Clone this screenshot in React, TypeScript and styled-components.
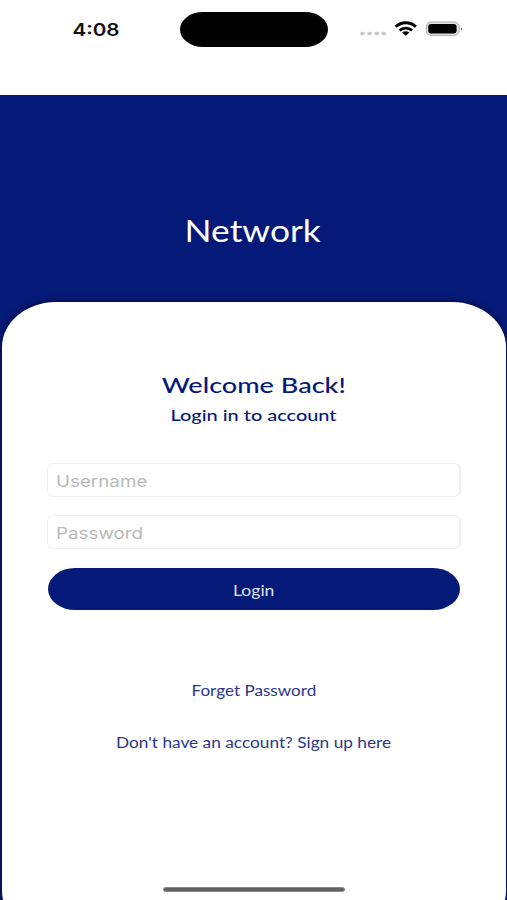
import React from "react";
import styled, { createGlobalStyle } from "styled-components";

const navy = "#051a78";

const GlobalStyle = createGlobalStyle`
  * { box-sizing: border-box; }
  body { margin: 0; background: #fff; }
`;

const Screen = styled.main`
  width: 507px;
  height: 900px;
  overflow: hidden;
  display: flex;
  flex-direction: column;
  position: relative;
  background: #fff;
  font-family: Lato, sans-serif;
`;

const StatusBar = styled.header`
  height: 95px;
  flex: none;
  display: grid;
  grid-template-columns: 180px 148px 1fr;
  align-items: start;
  padding-top: 12px;
`;

const Clock = styled.div`
  height: 35px;
  padding-left: 12px;
  display: flex;
  align-items: center;
  justify-content: center;
  font-family: Inter, sans-serif;
`;

const Island = styled.div`
  height: 35px;
  border-radius: 23px / 17.5px;
  background: #000;
`;

const StatusIcons = styled.div`
  height: 35px;
  padding-left: 31px;
  display: flex;
  align-items: center;
`;

const Text = styled.span<{ $size: number; $stretch: number; $weight?: number; $color?: string }>`
  display: inline-block;
  white-space: nowrap;
  font-size: ${(p) => p.$size}px;
  font-weight: ${(p) => p.$weight ?? 400};
  color: ${(p) => p.$color ?? navy};
  transform: scaleX(${(p) => p.$stretch});
`;

const Backdrop = styled.div`
  flex: 1;
  min-height: 0;
  display: flex;
  flex-direction: column;
  background: ${navy};
`;

const Brand = styled.div`
  height: 207px;
  flex: none;
  padding: 62px 1px 0 0;
  display: flex;
  align-items: center;
  justify-content: center;
`;

const Card = styled.section`
  height: 634px;
  flex: none;
  margin: 0 1.5px 0 2px;
  padding: 68px 45.5px 0 46px;
  display: flex;
  flex-direction: column;
  background: #fff;
  border-radius: 54px / 45px;
  box-shadow: 0 0 6px rgba(0, 0, 20, 0.75);
`;

const Line = styled.div<{ $height: number }>`
  height: ${(p) => p.$height}px;
  line-height: ${(p) => p.$height}px;
  text-align: center;
`;

const Form = styled.form`
  margin-top: 33px;
  display: flex;
  flex-direction: column;
`;

const Field = styled.label`
  height: 34px;
  margin: 0 -1px 18px;
  padding: 1px 8px 0;
  display: flex;
  border: 1px solid #f0f0f0;
  border-right-width: 2px;
  border-radius: 7px / 6px;
  overflow: hidden;
`;

const Input = styled.input`
  width: 320px;
  padding: 0;
  border: 0;
  outline: 0;
  background: transparent;
  color: #222;
  font: 400 16px Inter, sans-serif;
  transform: scaleX(1.175);
  transform-origin: left;
  &::placeholder { color: #b9b9b9; opacity: 1; }
`;

const Submit = styled.button`
  height: 42px;
  margin-top: 1px;
  padding: 2px 0 0;
  border: 0;
  border-radius: 27px / 21px;
  background: ${navy};
  font-family: inherit;
`;

const Links = styled.nav`
  margin-top: 68px;
  display: flex;
  flex-direction: column;
  gap: 28px;
`;

const HomeIndicator = styled.div`
  position: absolute;
  left: 163px;
  top: 887px;
  width: 182px;
  height: 5px;
  border-radius: 3px;
  background: #626262;
  border: 1px solid #8a8a8a;
`;

export default function App() {
  return (
    <Screen>
      <GlobalStyle />
      <StatusBar>
        <Clock>
          <Text $size={17.5} $stretch={1.18} $weight={600} $color="#111">4:08</Text>
        </Clock>
        <Island />
        <StatusIcons>
          <svg width="106" height="20" viewBox="0 0 106 20">
            <g fill="#c9c9c9">
              <rect x="1.2" y="11.7" width="4.6" height="3.6" rx="1.5" />
              <rect x="8.3" y="11.7" width="4.6" height="3.6" rx="1.5" />
              <rect x="15.4" y="11.7" width="4.6" height="3.6" rx="1.5" />
              <rect x="22.4" y="11.7" width="4.6" height="3.6" rx="1.5" />
            </g>
            <g fill="none" stroke="#000" strokeWidth="2.9">
              <path d="M36.7 6.7C42.3 1.4 51.3 1.4 56.9 6.7" />
              <path d="M40.5 10.5C44 7.3 49.6 7.3 53.1 10.5" />
            </g>
            <path d="M43.2 12.6Q46.8 10 50.4 12.6L46.8 15.8Z" fill="#000" />
            <rect x="67.2" y="2" width="33" height="13.4" rx="5" fill="#e2e2e2" stroke="#aaa" />
            <rect x="69.2" y="4" width="28.4" height="9.4" rx="3" fill="#000" />
            <path d="M101.8 7.2Q104.5 9 101.8 10.8Z" fill="#777" />
          </svg>
        </StatusIcons>
      </StatusBar>
      <Backdrop>
        <Brand>
          <Text $size={30} $stretch={1.18} $color="#fff">Network</Text>
        </Brand>
        <Card>
          <Line $height={30}><Text $size={22} $stretch={1.23} $weight={500}>Welcome Back!</Text></Line>
          <Line $height={30}><Text $size={16.2} $stretch={1.23} $weight={500}>Login in to account</Text></Line>
          <Form onSubmit={(e) => e.preventDefault()}>
            <Field><Input placeholder="Username" aria-label="Username" /></Field>
            <Field><Input type="password" placeholder="Password" aria-label="Password" /></Field>
            <Submit type="submit"><Text $size={15} $stretch={1.17} $color="#dde0f2">Login</Text></Submit>
          </Form>
          <Links>
            <Line $height={24}><Text $size={14.5} $stretch={1.18} $color="#2b3789">Forget Password</Text></Line>
            <Line $height={24}><Text $size={14.5} $stretch={1.19} $color="#2b3789">Don't have an account? Sign up here</Text></Line>
          </Links>
        </Card>
      </Backdrop>
      <HomeIndicator />
    </Screen>
  );
}
